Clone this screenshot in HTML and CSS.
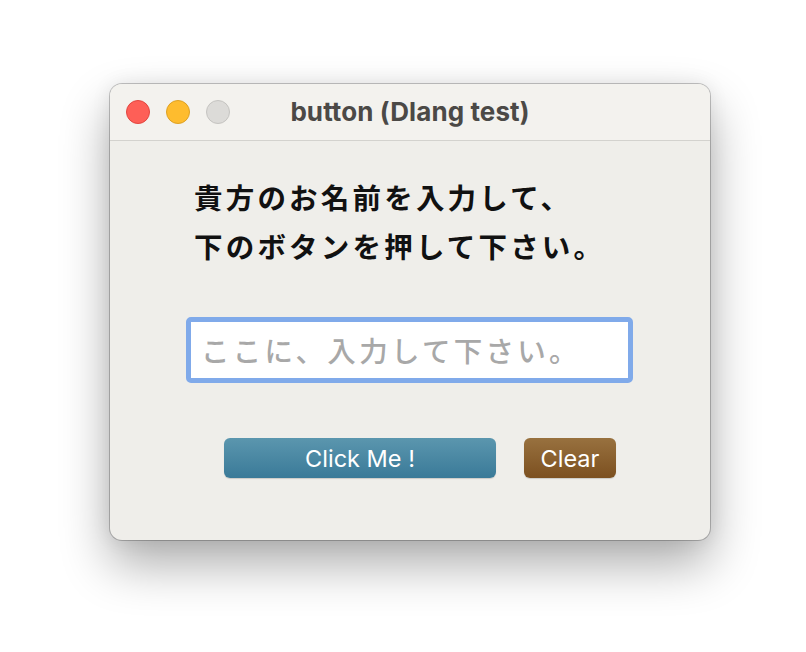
FILE: index.html
```html
<!DOCTYPE html>
<html lang="ja">
<head>
<meta charset="utf-8">
<link rel="stylesheet" href="styles.css">
</head>
<body>
<div class="window">
  <div class="titlebar">
    <div class="lights">
      <span class="light red"></span>
      <span class="light yellow"></span>
      <span class="light gray"></span>
    </div>
    <div class="title">button (Dlang test)</div>
  </div>
  <div class="content">
    <p class="msg">貴方のお名前を入力して、<br>下のボタンを押して下さい。</p>
    <div class="field"><input class="input" type="text" placeholder="ここに、入力して下さい。"></div>
    <div class="buttons">
      <button class="btn click">Click Me !</button>
      <button class="btn clear">Clear</button>
    </div>
  </div>
</div>
</body>
</html>
```
FILE: styles.css
```css
html, body { margin: 0; padding: 0; background: #ffffff; }
body { width: 806px; height: 652px; padding: 84px 0 0 110px; box-sizing: border-box; overflow: hidden; }
.window {
  width: 600px; height: 456px; box-sizing: border-box;
  border-radius: 12px; background: #efeeea;
  box-shadow: 0 0 0 1px rgba(0,0,0,0.22), 0 24px 50px rgba(0,0,0,0.33), 0 0 20px rgba(0,0,0,0.08);
  overflow: hidden;
  display: flex; flex-direction: column;
}
.titlebar {
  height: 56px; flex: none; background: #f3f2ee; border-bottom: 1px solid #d3d2ce;
  position: relative; display: flex; align-items: center; justify-content: center;
}
.lights { position: absolute; left: 16px; top: 16px; display: flex; gap: 16px; }
.light { width: 24px; height: 24px; border-radius: 50%; box-sizing: border-box; }
.red { background: #fe5f57; border: 1px solid #e2463f; }
.yellow { background: #febc2e; border: 1px solid #dea123; }
.gray { background: #dcdbd8; border: 1px solid #c5c4c1; }
.title {
  font-family: Inter, "Liberation Sans", sans-serif; font-weight: 700; font-size: 26px;
  color: #4b4946; letter-spacing: 0.1px; margin-top: -2px;
}
.content { padding: 31px 0 0 84px; }
.msg {
  margin: 0; font-family: "Noto Sans CJK JP", sans-serif; font-weight: 700;
  font-size: 28.5px; line-height: 49px; color: #111; letter-spacing: 3.2px;
}
.field {
  margin-top: 47px; margin-left: -8px; width: 447px; height: 66px; box-sizing: border-box;
  border: 5px solid #80aaea; border-radius: 5px; background: #fff; padding: 1px;
}
.input {
  width: 100%; height: 100%; box-sizing: border-box; border: 0; outline: none;
  padding: 0 0 2px 9px; margin: 0; background: #fff;
  font-family: "Noto Sans CJK JP", sans-serif; font-weight: 500; font-size: 28.5px; letter-spacing: 3.3px; color: #333;
}
.input::placeholder { color: #a8a8a8; }
.buttons { margin-top: 55px; margin-left: 30px; display: flex; gap: 28px; }
.btn {
  height: 40px; border: 0; border-radius: 6px; color: #fff;
  font-family: Inter, "Liberation Sans", sans-serif; font-size: 23.5px; padding: 0;
  box-shadow: 0 1px 1px rgba(0,0,0,0.15);
}
.click { width: 272px; background: linear-gradient(#5b96ae, #3a7a98); }
.clear { width: 92px; background: linear-gradient(#98713f, #7c5020); }
```
